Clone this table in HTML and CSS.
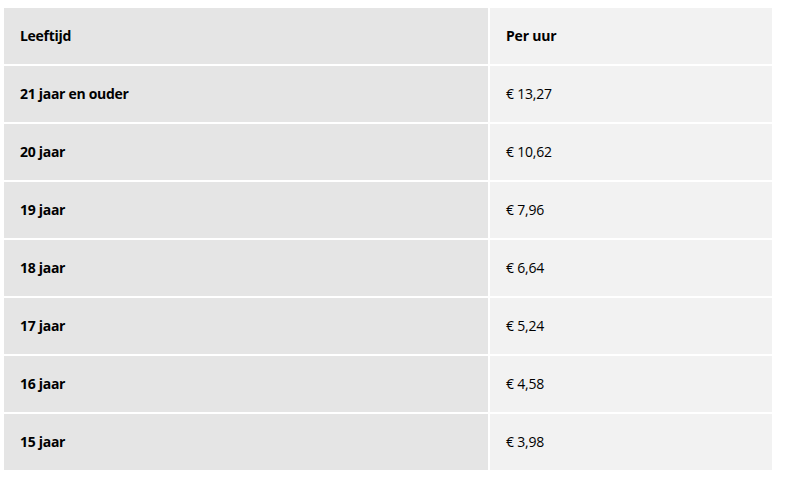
FILE: index.html
```html
<!DOCTYPE html>
<html lang="nl">
<head>
<meta charset="utf-8">
<link rel="stylesheet" href="styles.css">
</head>
<body>
<div class="table">
  <div class="row"><div class="cell age head">Leeftijd</div><div class="cell wage head">Per uur</div></div>
  <div class="row"><div class="cell age">21 jaar en ouder</div><div class="cell wage">€ 13,27</div></div>
  <div class="row"><div class="cell age">20 jaar</div><div class="cell wage">€ 10,62</div></div>
  <div class="row"><div class="cell age">19 jaar</div><div class="cell wage">€ 7,96</div></div>
  <div class="row"><div class="cell age">18 jaar</div><div class="cell wage">€ 6,64</div></div>
  <div class="row"><div class="cell age">17 jaar</div><div class="cell wage">€ 5,24</div></div>
  <div class="row"><div class="cell age">16 jaar</div><div class="cell wage">€ 4,58</div></div>
  <div class="row"><div class="cell age">15 jaar</div><div class="cell wage">€ 3,98</div></div>
</div>
</body>
</html>
```
FILE: styles.css
```css
html, body { margin: 0; padding: 0; background: #fff; }
body {
  font-family: "Open Sans", "Noto Sans", sans-serif;
  font-size: 14px;
  color: #000;
}
.table {
  margin: 8px 0 0 4px;
  width: 768px;
  display: flex;
  flex-direction: column;
  gap: 2px;
}
.row {
  display: grid;
  grid-template-columns: 484px 282px;
  gap: 2px;
}
.cell {
  height: 56px;
  display: flex;
  align-items: center;
  padding: 0 0 2px 16px;
  box-sizing: border-box;
}
.age { background: #e5e5e5; font-weight: 700; letter-spacing: -0.3px; }
.wage { background: #f2f2f2; letter-spacing: -0.2px; }
.head { font-weight: 700; }
```
